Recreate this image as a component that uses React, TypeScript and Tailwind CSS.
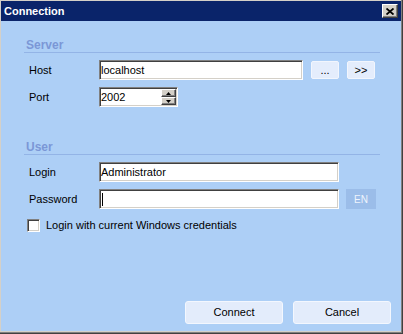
import React from "react";

const font = { fontFamily: '"Liberation Sans", Arial, sans-serif' };

const sunken =
  "border border-t-[#808080] border-l-[#808080] border-b-white border-r-white shadow-[inset_1px_1px_0_#404040,inset_-1px_-1px_0_#d4d0c8] bg-white";

function SectionHeader({ title }: { title: string }) {
  return (
    <div className="h-[15px] border-b border-[#93b4e6] pl-[2px] text-[12px] font-bold leading-[14px] text-[#7b97d6]">
      {title}
    </div>
  );
}

function Field({ label, children }: { label: string; children: React.ReactNode }) {
  return (
    <div className="flex h-[20px] items-center">
      <div className="w-[75px] pl-[5px] text-[11px] text-black">{label}</div>
      {children}
    </div>
  );
}

function SmallButton({ children }: { children: React.ReactNode }) {
  return (
    <div className="flex h-[18px] w-[28px] items-center justify-center rounded-[2px] border border-[#f2f6fd] bg-[#e4edfc] text-[11px] leading-none text-black">
      {children}
    </div>
  );
}

function SpinHalf({ up }: { up: boolean }) {
  return (
    <div className="flex h-[8px] w-[15px] items-center justify-center border border-t-white border-l-white border-b-[#404040] border-r-[#404040] bg-[#d4d0c8] shadow-[inset_-1px_-1px_0_#808080]">
      <svg width="5" height="3" viewBox="0 0 5 3">
        {up ? <path d="M2.5 0 L5 3 L0 3 Z" fill="#000" /> : <path d="M0 0 L5 0 L2.5 3 Z" fill="#000" />}
      </svg>
    </div>
  );
}

function DialogButton({ children }: { children: React.ReactNode }) {
  return (
    <div className="flex h-[23px] w-[98px] items-center justify-center rounded-[3px] border border-[#f3f7fe] bg-[#e3ecfb] text-[11px] text-black">
      {children}
    </div>
  );
}

export default function App() {
  return (
    <div
      className="flex h-[334px] w-[403px] flex-col border-b border-r border-[#404040] bg-[#d4d0c8]"
      style={font}
    >
      <div className="flex h-full flex-col border-b border-r border-[#808080] pl-px pt-px pb-px">
        {/* title bar */}
        <div className="flex h-[20px] items-center justify-between bg-[#0a246a] pl-[3px] pr-[3px]">
          <span className="text-[11px] font-bold text-white">Connection</span>
          <div className="flex h-[14px] w-[16px] items-center justify-center border border-t-white border-l-white border-b-[#404040] border-r-[#404040] bg-[#d4d0c8] shadow-[inset_-1px_-1px_0_#808080]">
            <svg width="8" height="7" viewBox="0 0 8 7">
              <path d="M0.5 0.5 L7.5 6.5 M7.5 0.5 L0.5 6.5" stroke="#000" strokeWidth="1.8" />
            </svg>
          </div>
        </div>

        {/* body */}
        <div className="flex flex-1 flex-col bg-[#adcff6]">
          <div className="ml-[23px] w-[356px] pt-[17px]">
            <SectionHeader title="Server" />
            <div className="mt-[7px]">
              <Field label="Host">
                <div className={`${sunken} flex h-[20px] w-[204px] items-center pl-[1px] text-[11px] text-black`}>
                  localhost
                </div>
                <div className="ml-[8px] flex gap-[8px]">
                  <SmallButton>...</SmallButton>
                  <SmallButton>&gt;&gt;</SmallButton>
                </div>
              </Field>
            </div>
            <div className="mt-[7px]">
              <Field label="Port">
                <div className={`${sunken} flex h-[20px] w-[79px] items-center justify-between pl-[1px] pr-px text-[11px] text-black`}>
                  <span>2002</span>
                  <div className="flex flex-col">
                    <SpinHalf up />
                    <SpinHalf up={false} />
                  </div>
                </div>
              </Field>
            </div>

            <div className="mt-[33px]">
              <SectionHeader title="User" />
            </div>
            <div className="mt-[7px]">
              <Field label="Login">
                <div className={`${sunken} flex h-[20px] w-[240px] items-center pl-[1px] text-[11px] text-black`}>
                  Administrator
                </div>
              </Field>
            </div>
            <div className="mt-[7px]">
              <Field label="Password">
                <div className={`${sunken} flex h-[20px] w-[240px] items-center pl-[2px]`}>
                  <div className="h-[13px] w-px bg-black" />
                </div>
                <div className="ml-[7px] flex h-[20px] w-[30px] items-center justify-center bg-[#9bbde9] text-[10px] text-[#eef4fc]">
                  EN
                </div>
              </Field>
            </div>
            <div className="mt-[8px] flex items-center pl-[3px]">
              <div className="h-[13px] w-[13px] border border-t-[#808080] border-l-[#808080] border-b-white border-r-white bg-white shadow-[inset_1px_1px_0_#404040,inset_-1px_-1px_0_#d4d0c8]" />
              <span className="ml-[6px] text-[11px] text-black">Login with current Windows credentials</span>
            </div>
          </div>

          <div className="mt-auto flex justify-end gap-[10px] pb-[7px] pr-[10px]">
            <DialogButton>Connect</DialogButton>
            <DialogButton>Cancel</DialogButton>
          </div>
        </div>
      </div>
    </div>
  );
}
